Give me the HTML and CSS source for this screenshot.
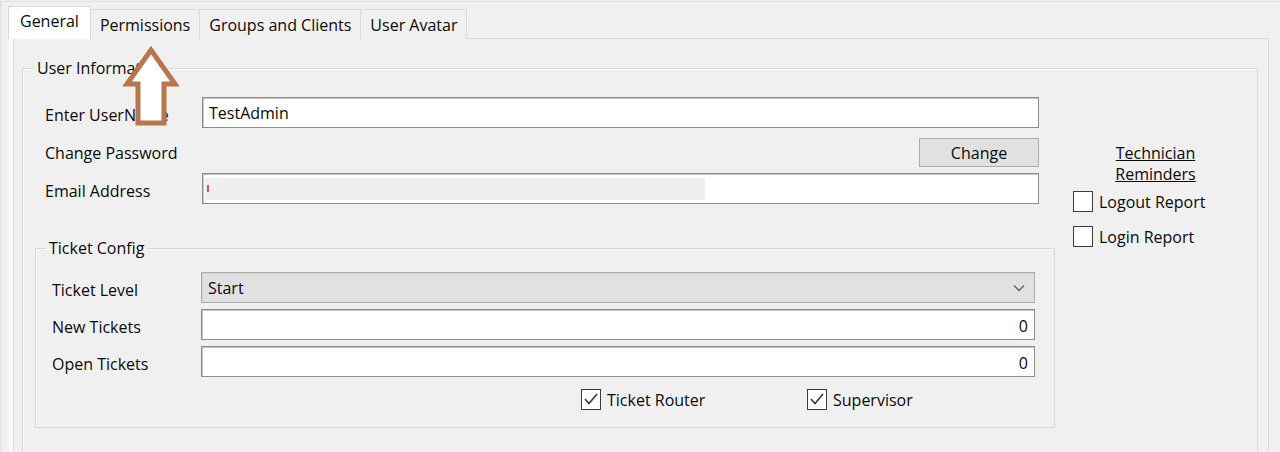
FILE: index.html
```html
<!DOCTYPE html>
<html>
<head>
<meta charset="utf-8">
<link rel="stylesheet" href="styles.css">
</head>
<body>
<div class="screen">
  <div class="tabs">
    <div class="tab active">General</div>
    <div class="tab">Permissions</div>
    <div class="tab">Groups and Clients</div>
    <div class="tab">User Avatar</div>
  </div>
  <div class="tabpage">
    <fieldset class="group user-info">
      <legend>User Information</legend>
      <div class="ui-body">
        <div class="ui-main">
          <div class="row row-name">
            <span class="label">Enter UserName</span>
            <div class="input">TestAdmin</div>
          </div>
          <div class="row row-pw">
            <span class="label">Change Password</span>
            <button class="btn">Change</button>
          </div>
          <div class="row row-email">
            <span class="label">Email Address</span>
            <div class="input email"><span class="redact"><span class="redmark"></span></span></div>
          </div>
          <fieldset class="group ticket">
            <legend>Ticket Config</legend>
            <div class="trow trow-first">
              <span class="label">Ticket Level</span>
              <div class="combo">
                <span>Start</span>
                <svg class="chev" width="12" height="8" viewBox="0 0 12 8"><polyline points="1,1.5 6,6.5 11,1.5" fill="none" stroke="#606060" stroke-width="1.3"/></svg>
              </div>
            </div>
            <div class="trow">
              <span class="label">New Tickets</span>
              <div class="input num">0</div>
            </div>
            <div class="trow">
              <span class="label">Open Tickets</span>
              <div class="input num">0</div>
            </div>
            <div class="check-row">
              <div class="check check-router">
                <span class="box"><svg width="18" height="18" viewBox="0 0 18 18"><polyline points="3,9 7,13.5 15,4" fill="none" stroke="#3a3a3a" stroke-width="1.6"/></svg></span>
                <span>Ticket Router</span>
              </div>
              <div class="check">
                <span class="box"><svg width="18" height="18" viewBox="0 0 18 18"><polyline points="3,9 7,13.5 15,4" fill="none" stroke="#3a3a3a" stroke-width="1.6"/></svg></span>
                <span>Supervisor</span>
              </div>
            </div>
          </fieldset>
        </div>
        <div class="ui-side">
          <div class="reminders">Technician<br>Reminders</div>
          <div class="check side-check first">
            <span class="box"></span><span>Logout Report</span>
          </div>
          <div class="check side-check">
            <span class="box"></span><span>Login Report</span>
          </div>
        </div>
      </div>
    </fieldset>
  </div>
  <svg class="arrow" width="70" height="92" viewBox="0 0 70 92">
    <polygon points="34,10 10,44 21,44 21,83 47,83 47,44 58,44" fill="#ffffff" stroke="#b57650" stroke-width="5" stroke-linejoin="miter"/>
  </svg>
</div>
</body>
</html>
```

FILE: styles.css
```css
* { box-sizing: border-box; }
html, body {
  margin: 0;
  padding: 0;
  background: #f0f0f0;
}
body {
  font-family: "Open Sans", "Liberation Sans", sans-serif;
  font-size: 16px;
  line-height: 20px;
  color: #0a0a0a;
}
.screen {
  position: relative;
  width: 1280px;
  height: 452px;
  overflow: hidden;
  margin-top: 1px;
  border-top: 1px solid #e2e2e2;
  border-left: 2px solid #e4e4e4;
}
.tabs {
  display: flex;
  align-items: flex-end;
  margin-top: 4px;
  margin-left: 6px;
  position: relative;
  z-index: 2;
  margin-bottom: -1px;
}
.tab {
  height: 30px;
  padding: 5px 9px 0;
  border: 1px solid #d9d9d9;
  border-bottom: none;
  border-left: none;
  background: #f0f0f0;
  white-space: nowrap;
}
.tab.active {
  height: 33px;
  padding: 4px 11px 0;
  background: #ffffff;
  border-left: 1px solid #d9d9d9;
}
.tabpage {
  margin-left: 11px;
  width: 1256px;
  height: 420px;
  border: 1px solid #d9d9d9;
  box-shadow: -4px 0 0 #fbfbfb;
}
.group {
  margin: 0;
  padding: 0;
  min-width: 0;
  border: 1px solid #d6d6d6;
  box-shadow: inset 1px 1px 0 #fafafa;
}
.group legend {
  padding: 0 3px;
  line-height: 20px;
}
.user-info {
  margin: 19px 0 0 8px;
  width: 1236px;
  height: 420px;
}
.user-info > legend { margin-left: 11px; }
.ui-body {
  display: flex;
}
.ui-main {
  width: 1031px;
  padding-left: 12px;
}
.row {
  display: flex;
  align-items: center;
  padding-left: 10px;
  padding-right: 15px;
}
.label { padding-top: 4px; }
.row .label { width: 157px; flex: none; }
.row-name { margin-top: 19px; }
.row-pw { margin-top: 10px; justify-content: space-between; }
.row-pw .label { padding-top: 0; }
.row-email { margin-top: 6px; }
.input {
  flex: 1;
  height: 31px;
  background: #fff;
  border: 1px solid #8c8c8c;
  box-shadow: inset 1px 1px 0 #c4c4c4;
  padding: 5px 5px 0 6px;
}
.input.num { text-align: right; padding: 6px 6px 0 6px; }
.email { padding: 4px 2px 0 2px; }
.redact {
  display: block;
  width: 500px;
  height: 22px;
  background: #efefef;
  position: relative;
}
.redmark {
  position: absolute;
  left: 2px;
  top: 7px;
  width: 2px;
  height: 7px;
  background: #c85a5a;
}
.btn {
  width: 120px;
  height: 29px;
  background: #e1e1e1;
  border: 1px solid #adadad;
  font: inherit;
  color: inherit;
  padding: 0;
}
.ticket {
  margin-top: 34px;
  width: 1020px;
  height: 190px;
}
.ticket > legend { margin-left: 10px; }
.trow {
  display: flex;
  align-items: center;
  padding-left: 16px;
  padding-right: 19px;
  margin-top: 6px;
}
.trow-first { margin-top: 14px; }
.trow .label { width: 149px; flex: none; }
.combo {
  flex: 1;
  height: 31px;
  background: #e1e1e1;
  border: 1px solid #adadad;
  box-shadow: inset 1px 1px 0 #d2d2d2;
  display: flex;
  align-items: center;
  justify-content: space-between;
  padding: 0 9px 0 6px;
}
.check-row {
  display: flex;
  padding-left: 545px;
  margin-top: 11px;
}
.check {
  display: flex;
  align-items: center;
  gap: 6px;
}
.check span:last-child { padding-top: 2px; }
.check-router { width: 226px; }
.box {
  width: 20px;
  height: 21px;
  border: 1.5px solid #3c3c3c;
  background: #fff;
  display: flex;
  align-items: center;
  justify-content: center;
  flex: none;
}
.ui-side {
  flex: 1;
  padding-top: 65px;
}
.reminders {
  text-align: center;
  text-decoration: underline;
  line-height: 21px;
}
.side-check { padding-left: 19px; height: 24px; }
.side-check.first { margin-top: 4px; }
.side-check + .side-check { margin-top: 11px; }
.arrow {
  position: absolute;
  left: 115px;
  top: 38px;
}
```
